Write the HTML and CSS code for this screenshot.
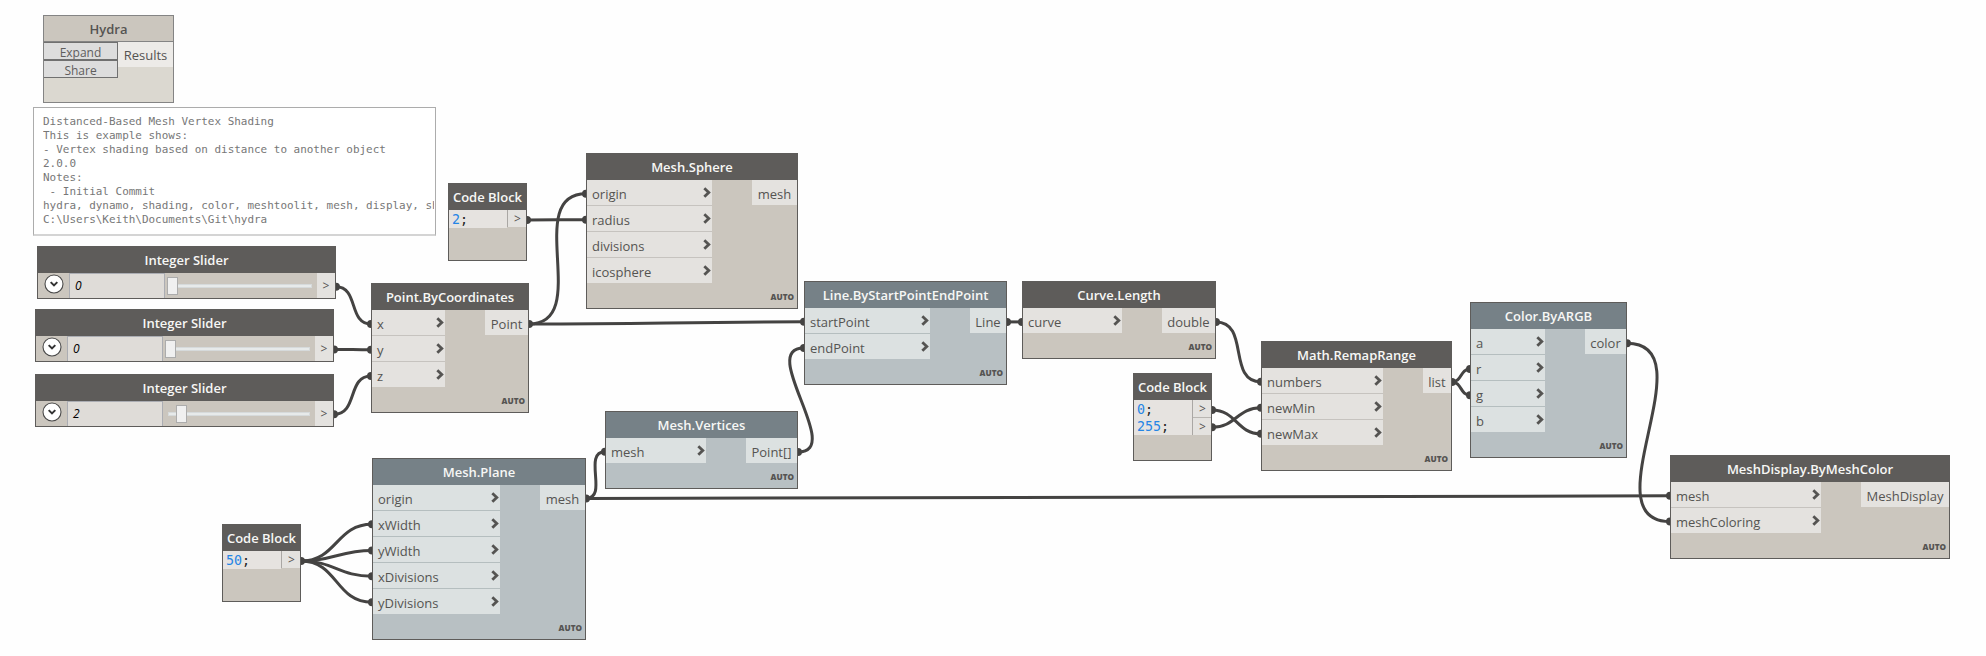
FILE: index.html
```html
<!DOCTYPE html>
<html lang="en">
<head>
<meta charset="utf-8">
<title>Distance-Based Mesh Vertex Shading</title>
<link rel="stylesheet" href="styles.css">
</head>
<body>
<svg class="defs" aria-hidden="true">
  <symbol id="chev" viewBox="0 0 8 11"><path d="M1.3 1.2 5.8 5.4 1.3 9.8" fill="none" stroke="#555452" stroke-width="2.8"/></symbol>
</svg>
<main class="canvas">
  <svg class="wires" width="1986" height="656" viewBox="0 0 1986 656">
    <g class="wire">
      <path d="M336 286.8C359 286.8 348 324 371 324"/>
      <path d="M334 349.4C351 349.4 354 349.8 371 349.8"/>
      <path d="M334 414.3C358 414.3 347 376 371 376"/>
      <path d="M529 324C593 324 522 193.7 586 193.7"/>
      <path d="M529 324C653 324 680 321.8 804 321.8"/>
      <path d="M527 220C554 220 559 219.7 586 219.7"/>
      <path d="M301 561C337 561 336 524.3 372 524.3"/>
      <path d="M301 561C333 561 340 550.4 372 550.4"/>
      <path d="M301 561C334 561 339 576.3 372 576.3"/>
      <path d="M301 561C338 561 335 602.3 372 602.3"/>
      <path d="M586 498.5C608.7 498.5 582.3 451.8 605 451.8"/>
      <path d="M586 498.5C1074 498.5 1182 495.8 1670 495.8"/>
      <path d="M798 452C845 452 757 348 804 348"/>
      <path d="M1007 321.9H1022"/>
      <path d="M1216 322C1250 322 1227 381.8 1261 381.8"/>
      <path d="M1212 410C1236.5 410 1236.5 433.8 1261 433.8"/>
      <path d="M1212 427.3C1236 427.3 1237 407.8 1261 407.8"/>
      <path d="M1452 382C1462 382 1460 369 1470 369"/>
      <path d="M1452 382C1462 382 1460 395.2 1470 395.2"/>
      <path d="M1627 343.3C1709 343.3 1588 521.6 1670 521.6"/>
    </g>
    <g class="dots">
      <circle cx="336" cy="286.8" r="4"/><circle cx="334" cy="349.4" r="4"/><circle cx="334" cy="414.3" r="4"/>
      <circle cx="371" cy="324" r="4"/><circle cx="371" cy="349.8" r="4"/><circle cx="371" cy="376" r="4"/>
      <circle cx="529" cy="324" r="4"/><circle cx="586" cy="193.7" r="4"/><circle cx="586" cy="219.7" r="4"/>
      <circle cx="527" cy="220" r="4"/><circle cx="804" cy="321.8" r="4"/><circle cx="804" cy="348" r="4"/>
      <circle cx="301" cy="561" r="4"/><circle cx="372" cy="524.3" r="4"/><circle cx="372" cy="550.4" r="4"/>
      <circle cx="372" cy="576.3" r="4"/><circle cx="372" cy="602.3" r="4"/><circle cx="586" cy="498.5" r="4"/>
      <circle cx="605" cy="451.8" r="4"/><circle cx="798" cy="452" r="4"/><circle cx="1007" cy="321.9" r="4"/>
      <circle cx="1022" cy="321.9" r="4"/><circle cx="1216" cy="322" r="4"/><circle cx="1212" cy="410" r="4"/>
      <circle cx="1212" cy="427.3" r="4"/><circle cx="1261" cy="381.8" r="4"/><circle cx="1261" cy="407.8" r="4"/>
      <circle cx="1261" cy="433.8" r="4"/><circle cx="1452" cy="382" r="4"/><circle cx="1470" cy="369" r="4"/>
      <circle cx="1470" cy="395.2" r="4"/><circle cx="1627" cy="343.3" r="4"/><circle cx="1670" cy="495.8" r="4"/>
      <circle cx="1670" cy="521.6" r="4"/>
    </g>
  </svg>

  <section class="node hydra">
    <h2>Hydra</h2>
    <div class="body">
      <div class="actions"><button>Expand</button><button>Share</button></div>
      <span class="out">Results</span>
    </div>
  </section>

  <div class="note"><pre>Distanced-Based Mesh Vertex Shading
This is example shows:
- Vertex shading based on distance to another object
2.0.0
Notes:
 - Initial Commit
hydra, dynamo, shading, color, meshtoolit, mesh, display, sh
C:\Users\Keith\Documents\Git\hydra</pre></div>

  <section class="node slider s1">
    <h2>Integer Slider</h2>
    <div class="body">
      <svg class="toggle" viewBox="0 0 20 20"><circle cx="10" cy="10" r="9"/><path d="M6.7 8.1 10 11.4 13.3 8.1"/></svg>
      <span class="value">0</span>
      <span class="track"><i class="thumb"></i></span>
      <span class="port">&gt;</span>
    </div>
  </section>
  <section class="node slider s2">
    <h2>Integer Slider</h2>
    <div class="body">
      <svg class="toggle" viewBox="0 0 20 20"><circle cx="10" cy="10" r="9"/><path d="M6.7 8.1 10 11.4 13.3 8.1"/></svg>
      <span class="value">0</span>
      <span class="track"><i class="thumb"></i></span>
      <span class="port">&gt;</span>
    </div>
  </section>
  <section class="node slider s3">
    <h2>Integer Slider</h2>
    <div class="body">
      <svg class="toggle" viewBox="0 0 20 20"><circle cx="10" cy="10" r="9"/><path d="M6.7 8.1 10 11.4 13.3 8.1"/></svg>
      <span class="value">2</span>
      <span class="track"><i class="thumb moved"></i></span>
      <span class="port">&gt;</span>
    </div>
  </section>

  <section class="node code c1">
    <h2>Code Block</h2>
    <div class="body">
      <div class="source"><div><b>2</b>;</div></div>
      <div class="ports"><span>&gt;</span></div>
    </div>
  </section>
  <section class="node code c2">
    <h2>Code Block</h2>
    <div class="body">
      <div class="source"><div><b>50</b>;</div></div>
      <div class="ports"><span>&gt;</span></div>
    </div>
  </section>
  <section class="node code c3">
    <h2>Code Block</h2>
    <div class="body">
      <div class="source"><div><b>0</b>;</div><div><b>255</b>;</div></div>
      <div class="ports"><span>&gt;</span><span>&gt;</span></div>
    </div>
  </section>

  <section class="node point">
    <h2>Point.ByCoordinates</h2>
    <div class="body">
      <ul class="ins">
        <li>x<svg><use href="#chev"/></svg></li>
        <li>y<svg><use href="#chev"/></svg></li>
        <li>z<svg><use href="#chev"/></svg></li>
      </ul>
      <span class="out">Point</span>
    </div>
    <footer>AUTO</footer>
  </section>

  <section class="node sphere">
    <h2>Mesh.Sphere</h2>
    <div class="body">
      <ul class="ins">
        <li>origin<svg><use href="#chev"/></svg></li>
        <li>radius<svg><use href="#chev"/></svg></li>
        <li>divisions<svg><use href="#chev"/></svg></li>
        <li>icosphere<svg><use href="#chev"/></svg></li>
      </ul>
      <span class="out">mesh</span>
    </div>
    <footer>AUTO</footer>
  </section>

  <section class="node blue plane">
    <h2>Mesh.Plane</h2>
    <div class="body">
      <ul class="ins">
        <li>origin<svg><use href="#chev"/></svg></li>
        <li>xWidth<svg><use href="#chev"/></svg></li>
        <li>yWidth<svg><use href="#chev"/></svg></li>
        <li>xDivisions<svg><use href="#chev"/></svg></li>
        <li>yDivisions<svg><use href="#chev"/></svg></li>
      </ul>
      <span class="out">mesh</span>
    </div>
    <footer>AUTO</footer>
  </section>

  <section class="node blue vertices">
    <h2>Mesh.Vertices</h2>
    <div class="body">
      <ul class="ins">
        <li>mesh<svg><use href="#chev"/></svg></li>
      </ul>
      <span class="out">Point[]</span>
    </div>
    <footer>AUTO</footer>
  </section>

  <section class="node blue line">
    <h2>Line.ByStartPointEndPoint</h2>
    <div class="body">
      <ul class="ins">
        <li>startPoint<svg><use href="#chev"/></svg></li>
        <li>endPoint<svg><use href="#chev"/></svg></li>
      </ul>
      <span class="out">Line</span>
    </div>
    <footer>AUTO</footer>
  </section>

  <section class="node curve">
    <h2>Curve.Length</h2>
    <div class="body">
      <ul class="ins">
        <li>curve<svg><use href="#chev"/></svg></li>
      </ul>
      <span class="out">double</span>
    </div>
    <footer>AUTO</footer>
  </section>

  <section class="node remap">
    <h2>Math.RemapRange</h2>
    <div class="body">
      <ul class="ins">
        <li>numbers<svg><use href="#chev"/></svg></li>
        <li>newMin<svg><use href="#chev"/></svg></li>
        <li>newMax<svg><use href="#chev"/></svg></li>
      </ul>
      <span class="out">list</span>
    </div>
    <footer>AUTO</footer>
  </section>

  <section class="node blue argb">
    <h2>Color.ByARGB</h2>
    <div class="body">
      <ul class="ins">
        <li>a<svg><use href="#chev"/></svg></li>
        <li>r<svg><use href="#chev"/></svg></li>
        <li>g<svg><use href="#chev"/></svg></li>
        <li>b<svg><use href="#chev"/></svg></li>
      </ul>
      <span class="out">color</span>
    </div>
    <footer>AUTO</footer>
  </section>

  <section class="node display">
    <h2>MeshDisplay.ByMeshColor</h2>
    <div class="body">
      <ul class="ins">
        <li>mesh<svg><use href="#chev"/></svg></li>
        <li>meshColoring<svg><use href="#chev"/></svg></li>
      </ul>
      <span class="out">MeshDisplay</span>
    </div>
    <footer>AUTO</footer>
  </section>
</main>
</body>
</html>
```
FILE: styles.css
```css
* { box-sizing: border-box; }
body {
  margin: 0;
  background: #fefefe;
  font-family: "Open Sans", sans-serif;
  font-size: 13px;
  color: #555452;
}
.defs { position: absolute; width: 0; height: 0; }
.canvas {
  position: relative;
  width: 1986px;
  height: 656px;
  overflow: hidden;
}
.wires { position: absolute; inset: 0; }
.wire { fill: none; stroke: #444342; stroke-width: 3; }
.dots { fill: #444342; }

/* Nodes are placed freely on the graph canvas */
.node {
  position: absolute;
  display: flex;
  flex-direction: column;
  border: 1px solid #5e5c5a;
  background: #cbc6be;
}
.node h2 {
  flex: none;
  height: 26px;
  margin: 0;
  background: #5e5c5a;
  color: #f7f7f5;
  font-size: 13px;
  font-weight: 600;
  line-height: 27px;
  text-align: center;
  white-space: nowrap;
}
.body {
  display: flex;
  align-items: flex-start;
  justify-content: space-between;
}
.ins {
  display: flex;
  flex-direction: column;
  gap: 1px;
  width: var(--ins);
  margin: 0;
  padding: 0;
  list-style: none;
  background: #c6c3bf;
}
.ins li, .out {
  display: flex;
  align-items: center;
  justify-content: space-between;
  height: 25px;
  padding: 2px 1px 0 5px;
  background: #e4e2df;
  line-height: 18px;
}
.ins svg { width: 8px; height: 11px; margin-top: -3px; }
.out { width: var(--out); padding: 2px 0 0; justify-content: center; }
footer {
  height: 25px;
  margin-top: auto;
  padding-right: 3px;
  font-size: 8.2px;
  font-weight: 800;
  line-height: 27px;
  text-align: right;
}
.blue { background: #b8c0c3; }
.blue h2 { background: #768187; }
.blue .ins { background: #b5bebf; }
.blue li, .blue .out { background: #dce1e1; }

.point { left: 371px; top: 283px; width: 158px; height: 130px; --ins: 73px; --out: 43px; }
.sphere { left: 586px; top: 153px; width: 212px; height: 156px; --ins: 125px; --out: 45px; }
.plane { left: 372px; top: 458px; width: 214px; height: 182px; --ins: 127px; --out: 45px; }
.vertices { left: 605px; top: 411px; width: 193px; height: 78px; --ins: 100px; --out: 51px; }
.line { left: 804px; top: 281px; width: 203px; height: 104px; --ins: 125px; --out: 36px; }
.curve { left: 1022px; top: 281px; width: 194px; height: 78px; --ins: 99px; --out: 53px; }
.remap { left: 1261px; top: 341px; width: 191px; height: 130px; --ins: 121px; --out: 28px; }
.argb { left: 1470px; top: 302px; width: 157px; height: 156px; --ins: 74px; --out: 41px; }
.display { left: 1670px; top: 455px; width: 280px; height: 104px; --ins: 150px; --out: 88px; }

/* Integer sliders */
.slider { width: 299px; height: 53px; }
.s1 { left: 37px; top: 246px; }
.s2 { left: 35px; top: 309px; }
.s3 { left: 35px; top: 374px; }
.slider .body { height: 25px; justify-content: flex-start; }
.toggle { flex: none; width: 20px; height: 20px; margin: 1px 5px 0 6px; }
.toggle circle { fill: #fff; stroke: #4a4a4a; stroke-width: 1.1; }
.toggle path { fill: none; stroke: #333; stroke-width: 2; }
.value {
  width: 96px;
  height: 25px;
  padding-left: 5px;
  border: solid #abadb3;
  border-width: 1px 1px 0 1px;
  background: #dfdcd8;
  color: #000;
  font-size: 12px;
  font-style: italic;
  line-height: 24px;
}
.track {
  width: 142px;
  height: 4px;
  margin: 11px 5px 0;
  border: 1px solid #d6dadb;
  background: #e7eaea;
}
.thumb {
  display: block;
  width: 11px;
  height: 18px;
  margin: -8px 0 0 -4px;
  border: 1px solid #acacac;
  background: #f0f0f0;
}
.thumb.moved { margin-left: 7px; }
.port { width: 18px; height: 25px; background: #e4e2df; line-height: 25px; text-align: center; font-size: 12px; }

/* Code blocks */
.code { width: 79px; height: 78px; }
.c1 { left: 448px; top: 183px; }
.c2 { left: 222px; top: 524px; }
.c3 { left: 1133px; top: 373px; height: 88px; }
.source {
  flex: 1;
  padding: 1px 0 0 3px;
  background: #e6e3e0;
  color: #222;
  font: 13.3px/17px "DejaVu Sans Mono", monospace;
}
.source b { color: #2585e5; font-weight: 400; }
.ports { display: flex; flex-direction: column; gap: 1px; width: 19px; border-left: 1px solid #aaa7a4; background: #b9b6b2; }
.ports span { height: 17px; padding-left: 1px; background: #e4e2df; line-height: 18px; text-align: center; font-size: 12px; }

/* Hydra node */
.hydra { left: 43px; top: 15px; width: 131px; height: 88px; --out: 55px; border-color: #848484; background: #dbd8d0; }
.hydra h2 { background: #cbc6be; color: #555452; border-bottom: 1px solid #848484; }
.hydra .out { padding-top: 1px; background: #edebe8; }
.actions { width: 74px; }
.actions button {
  display: block;
  width: 74px;
  height: 18px;
  padding: 2px 0 0;
  border: 1px solid #707070;
  border-left: 0;
  background: #dddddd;
  color: #5f5e5d;
  font: 12px/16px "Open Sans", sans-serif;
  text-align: center;
  overflow: hidden;
}

.note {
  position: absolute;
  left: 33px;
  top: 107px;
  width: 403px;
  height: 129px;
  padding: 7px 1px 0 9px;
  border: 1px solid #acacac;
  border-bottom: 2px solid #d4d4d4;
  background: #fff;
}
.note pre {
  margin: 0;
  color: #777;
  font: 10.96px/14px "DejaVu Sans Mono", monospace;
  overflow: hidden;
}
```
